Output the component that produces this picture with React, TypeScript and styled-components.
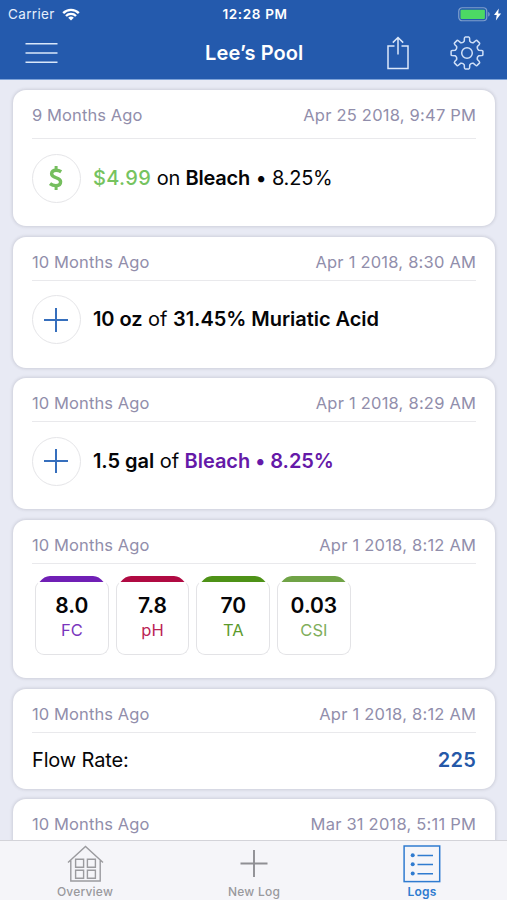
import React from 'react';
import styled, { createGlobalStyle } from 'styled-components';

const GlobalStyle = createGlobalStyle`
  * { box-sizing: border-box; }
  body { margin: 0; background: #e8eaf4; }
  svg { display: block; flex: none; }
`;

const Screen = styled.div`
  width: 507px;
  height: 900px;
  overflow: hidden;
  display: flex;
  flex-direction: column;
  background: #e8eaf4;
  color: #050507;
  font-family: Inter, 'Liberation Sans', sans-serif;
`;

const Header = styled.header`
  height: 80px;
  flex: none;
  background: #245aad;
  border-bottom: 1px solid #7ea3d9;
  color: #fff;
`;

const StatusBar = styled.div`
  height: 27px;
  display: grid;
  grid-template-columns: 1fr auto 1fr;
  align-items: center;
  padding: 0 5px 0 8px;
  font-size: 13.5px;
  line-height: 27px;
`;

const Carrier = styled.div`
  display: flex;
  align-items: center;
  gap: 7px;
  letter-spacing: 0.35px;
  line-height: 28px;
  color: #e6effc;
`;

const Clock = styled.div`
  padding-top: 1px;
  font-weight: 600;
  letter-spacing: 0.65px;
`;

const Power = styled.div`
  display: flex;
  justify-content: flex-end;
  align-items: center;
  gap: 3px;
`;

const NavBar = styled.div`
  height: 50px;
  display: grid;
  grid-template-columns: 1fr auto 1fr;
  align-items: center;
  padding: 0 23.5px 0 25px;
`;

const Title = styled.h1`
  margin: 0;
  padding-top: 1px;
  font-size: 20px;
  font-weight: 600;
  line-height: 50px;
  letter-spacing: 0.1px;
`;

const Actions = styled.div`
  display: flex;
  justify-content: flex-end;
  align-items: center;
  gap: 41px;
`;

const Feed = styled.main`
  flex: 1;
  min-height: 0;
  overflow: hidden;
  display: flex;
  flex-direction: column;
  gap: 10.6px;
  padding: 10.2px 12px 0 13px;
`;

const Card = styled.section<{ $height: number }>`
  flex: none;
  height: ${(p) => p.$height}px;
  padding: 0 19px;
  border-radius: 13px;
  background: #fff;
  box-shadow: 0 0 3px 1px rgba(70, 70, 90, 0.16);
`;

const CardHead = styled.div<{ $height: number }>`
  height: ${(p) => p.$height}px;
  padding-top: 15px;
  display: flex;
  justify-content: space-between;
  border-bottom: 1px solid #e9e9ec;
  color: #918eab;
  font-size: 16.5px;
  line-height: 20px;
`;

const Age = styled.span`
  letter-spacing: 0.1px;
`;

const Stamp = styled.span`
  letter-spacing: 0.22px;
  margin-right: -0.2px;
`;

const Entry = styled.div`
  display: flex;
  align-items: center;
  gap: 12.4px;
  padding-top: 14.5px;
  margin-left: -0.5px;
  font-size: 20px;
  white-space: pre;
`;

const Circle = styled.div`
  width: 49px;
  height: 49px;
  flex: none;
  display: grid;
  place-items: center;
  border: 1.5px solid #e5e5e8;
  border-radius: 50%;
`;

const EntryText = styled.div<{ $spacing: number }>`
  padding-bottom: 1px;
  letter-spacing: ${(p) => p.$spacing}px;
`;

const Strong = styled.span<{ $color?: string }>`
  font-weight: 600;
  color: ${(p) => p.$color ?? 'inherit'};
`;

const Price = styled.span`
  font-weight: 500;
  letter-spacing: 0.4px;
  color: #76c35f;
`;

const Readings = styled.div`
  display: flex;
  gap: 7px;
  padding: 16px 3px 0;
`;

const Reading = styled.div`
  position: relative;
  width: 73.7px;
  height: 75px;
  display: flex;
  flex-direction: column;
  align-items: center;
  padding-top: 13px;
  border: 1.5px solid #e3e3e6;
  border-top-color: transparent;
  border-radius: 9px;
`;

const ReadingCap = styled.svg`
  position: absolute;
  top: -4.5px;
  left: 3.4px;
`;

const ReadingValue = styled.div`
  font-size: 21px;
  font-weight: 600;
  line-height: 24px;
`;

const ReadingLabel = styled.div<{ $color: string }>`
  font-size: 16.5px;
  line-height: 24px;
  color: ${(p) => p.$color};
`;

const Metric = styled.div`
  height: 55px;
  display: flex;
  align-items: center;
  justify-content: space-between;
  font-size: 20px;
  letter-spacing: -0.15px;
`;

const MetricValue = styled(Strong)`
  letter-spacing: 0.25px;
`;

const TabBar = styled.nav`
  flex: none;
  height: 60px;
  display: grid;
  grid-template-columns: 170px 168px 168px;
  background: #f5f5f9;
  border-top: 1px solid #d3d3d9;
`;

const Tab = styled.div<{ $active?: boolean }>`
  display: flex;
  flex-direction: column;
  align-items: center;
  padding-top: 4px;
  gap: 1px;
  color: ${(p) => (p.$active ? '#2f7bd0' : '#99999d')};
  font-size: 12px;
  font-weight: ${(p) => (p.$active ? 600 : 500)};
  line-height: 15px;
  letter-spacing: 0.22px;
`;

const WifiIcon = () => (
  <svg width="18" height="13" viewBox="0 0 18 13" fill="none" stroke="#fff" strokeWidth="2.4">
    <path d="M1.2 5.1a11 11 0 0 1 15.6 0M4 8a7 7 0 0 1 10 0" />
    <path d="M9 12.6 6.2 9.8a4 4 0 0 1 5.6 0Z" fill="#fff" stroke="none" />
  </svg>
);

const BatteryIcon = () => (
  <svg width="33" height="15" viewBox="0 0 33 15">
    <rect x=".75" y=".75" width="28" height="13" rx="3.5" fill="none" stroke="#7f9fcd" strokeWidth="1.2" />
    <rect x="2.5" y="2.7" width="24.4" height="9.2" rx="1" fill="#4cd964" />
    <path d="M30.2 5c2 .6 2 4 0 4.6Z" fill="#7f9fcd" />
  </svg>
);

const BoltIcon = () => (
  <svg width="8" height="13" viewBox="0 0 8 13" fill="#fff">
    <path d="M4.8.5 0 7h2.7L1.9 12.5 7.1 5.6H4.2Z" />
  </svg>
);

const MenuIcon = () => (
  <svg width="33" height="24" viewBox="0 0 33 24" stroke="#d9e7fa" strokeWidth="1.6">
    <path d="M.5 2.7h32M.5 12h32M.5 21.3h32" />
  </svg>
);

const ShareIcon = () => (
  <svg width="22" height="34" viewBox="0 0 22 34" fill="none" stroke="#dce8fa" strokeWidth="1.5">
    <path d="M7.5 10H1v22.5h20V10h-6.5M11 18.5V1.5M5.8 6.6 11 1.5l5.2 5.1" />
  </svg>
);

const toothPath = Array.from({ length: 8 }, (_, i) => {
  const at = (radius: number, degrees: number) => {
    const a = ((i * 45 + degrees - 90) * Math.PI) / 180;
    return `${(17 + radius * Math.cos(a)).toFixed(2)} ${(17 + radius * Math.sin(a)).toFixed(2)}`;
  };
  return `${i ? 'L' : 'M'}${at(12.2, -13)} L${at(15, -10)} Q${at(16, -9)} ${at(16, -7)} L${at(16, 7)} Q${at(16, 9)} ${at(15, 10)} L${at(12.2, 13)} Q${at(10.6, 22.5)} ${at(12.2, 32)}`;
}).join(' ');

const GearIcon = () => (
  <svg width="34" height="34" viewBox="0 0 34 34" fill="none" stroke="#cfdff7" strokeWidth="1.5" strokeLinejoin="round">
    <path d={`${toothPath} Z`} />
    <circle cx="17" cy="17" r="5.3" />
  </svg>
);

const DollarIcon = () => (
  <svg width="16" height="26" viewBox="0 0 16 26" fill="none" stroke="#75be5e" strokeWidth="3.4">
    <path d="M13.2 6.7C11.8 5.8 10 5.2 8 5.2c-2.8 0-4.4 1.4-4.4 3.5 0 5 9 3.1 9 8 0 2.4-1.9 3.9-4.7 3.9-2.3 0-4.4-.8-5.9-2" />
    <path d="M8.1 1v4M8.1 21v4" strokeWidth="3" />
  </svg>
);

const PlusIcon = () => (
  <svg width="24" height="24" viewBox="0 0 24 24" stroke="#366fbd" strokeWidth="2">
    <path d="M0 12h24M12 0v24" />
  </svg>
);

const HouseIcon = () => (
  <svg width="37" height="38" viewBox="0 0 37 38" fill="none" stroke="#9b9b9f" strokeWidth="1.4">
    <path d="M1 17.6 18.5 1.5 36 17.6M3.8 15.5V36h29.4V15.5" />
    <path d="M8.6 14.2h8v8h-8ZM20.4 14.2h8v8h-8ZM8.6 25.2h8v8h-8ZM20.4 25.2h8v8h-8Z" />
  </svg>
);

const NewIcon = () => (
  <svg width="28" height="38" viewBox="0 0 28 38" stroke="#8f8f94" strokeWidth="1.9">
    <path d="M.5 18.5h27M14 5v27" />
  </svg>
);

const LogsIcon = () => (
  <svg width="38" height="38" viewBox="0 0 38 38" fill="none" stroke="#2f7bd0" strokeWidth="1.5">
    <rect x="1.1" y="1" width="35.6" height="35.6" />
    <path d="M14.5 10.5H30M14.5 19.5H30M14.5 28.7H30" />
    <g fill="#2f7bd0" stroke="none">
      <circle cx="9.7" cy="10.2" r="2" />
      <circle cx="9.7" cy="19.3" r="2" />
      <circle cx="9.7" cy="28.6" r="2" />
    </g>
  </svg>
);

const readings = [
  { value: '8.0', label: 'FC', cap: '#701fb5', color: '#7a35bd' },
  { value: '7.8', label: 'pH', cap: '#b00a42', color: '#bb2555' },
  { value: '70', label: 'TA', cap: '#4e9217', color: '#5b9a2b' },
  { value: '0.03', label: 'CSI', cap: '#70a346', color: '#80ae5b' },
];

interface LogCardProps {
  height: number;
  age: string;
  date: string;
  headHeight?: number;
  children?: React.ReactNode;
}

const LogCard = ({ height, age, date, headHeight = 44, children }: LogCardProps) => (
  <Card $height={height}>
    <CardHead $height={headHeight}>
      <Age>{age}</Age>
      <Stamp>{date}</Stamp>
    </CardHead>
    {children}
  </Card>
);

export default function App() {
  return (
    <Screen>
      <GlobalStyle />
      <Header>
        <StatusBar>
          <Carrier>Carrier <WifiIcon /></Carrier>
          <Clock>12:28 PM</Clock>
          <Power><BatteryIcon /><BoltIcon /></Power>
        </StatusBar>
        <NavBar>
          <MenuIcon />
          <Title>Lee’s Pool</Title>
          <Actions><ShareIcon /><GearIcon /></Actions>
        </NavBar>
      </Header>
      <Feed>
        <LogCard height={136} headHeight={49} age="9 Months Ago" date="Apr 25 2018, 9:47 PM">
          <Entry>
            <Circle><DollarIcon /></Circle>
            <EntryText $spacing={-0.22}><Price>$4.99</Price> on <Strong>Bleach</Strong> • 8.25%</EntryText>
          </Entry>
        </LogCard>
        <LogCard height={131} age="10 Months Ago" date="Apr 1 2018, 8:30 AM">
          <Entry>
            <Circle><PlusIcon /></Circle>
            <EntryText $spacing={-0.04}><Strong>10 oz</Strong> of <Strong>31.45% Muriatic Acid</Strong></EntryText>
          </Entry>
        </LogCard>
        <LogCard height={131} age="10 Months Ago" date="Apr 1 2018, 8:29 AM">
          <Entry>
            <Circle><PlusIcon /></Circle>
            <EntryText $spacing={-0.04}><Strong>1.5 gal</Strong> of <Strong $color="#6519a8">Bleach • 8.25%</Strong></EntryText>
          </Entry>
        </LogCard>
        <LogCard height={158} age="10 Months Ago" date="Apr 1 2018, 8:12 AM">
          <Readings>
            {readings.map((r) => (
              <Reading key={r.label}>
                <ReadingCap width="66" height="6" viewBox="0 0 66 6">
                  <path d="M.5 6Q5 0 11 0H54Q60 0 64.5 6Z" fill={r.cap} />
                </ReadingCap>
                <ReadingValue>{r.value}</ReadingValue>
                <ReadingLabel $color={r.color}>{r.label}</ReadingLabel>
              </Reading>
            ))}
          </Readings>
        </LogCard>
        <LogCard height={100} age="10 Months Ago" date="Apr 1 2018, 8:12 AM">
          <Metric><span>Flow Rate:</span><MetricValue $color="#2558a8">225</MetricValue></Metric>
        </LogCard>
        <LogCard height={131} age="10 Months Ago" date="Mar 31 2018, 5:11 PM" />
      </Feed>
      <TabBar>
        <Tab><HouseIcon />Overview</Tab>
        <Tab><NewIcon />New Log</Tab>
        <Tab $active><LogsIcon />Logs</Tab>
      </TabBar>
    </Screen>
  );
}
